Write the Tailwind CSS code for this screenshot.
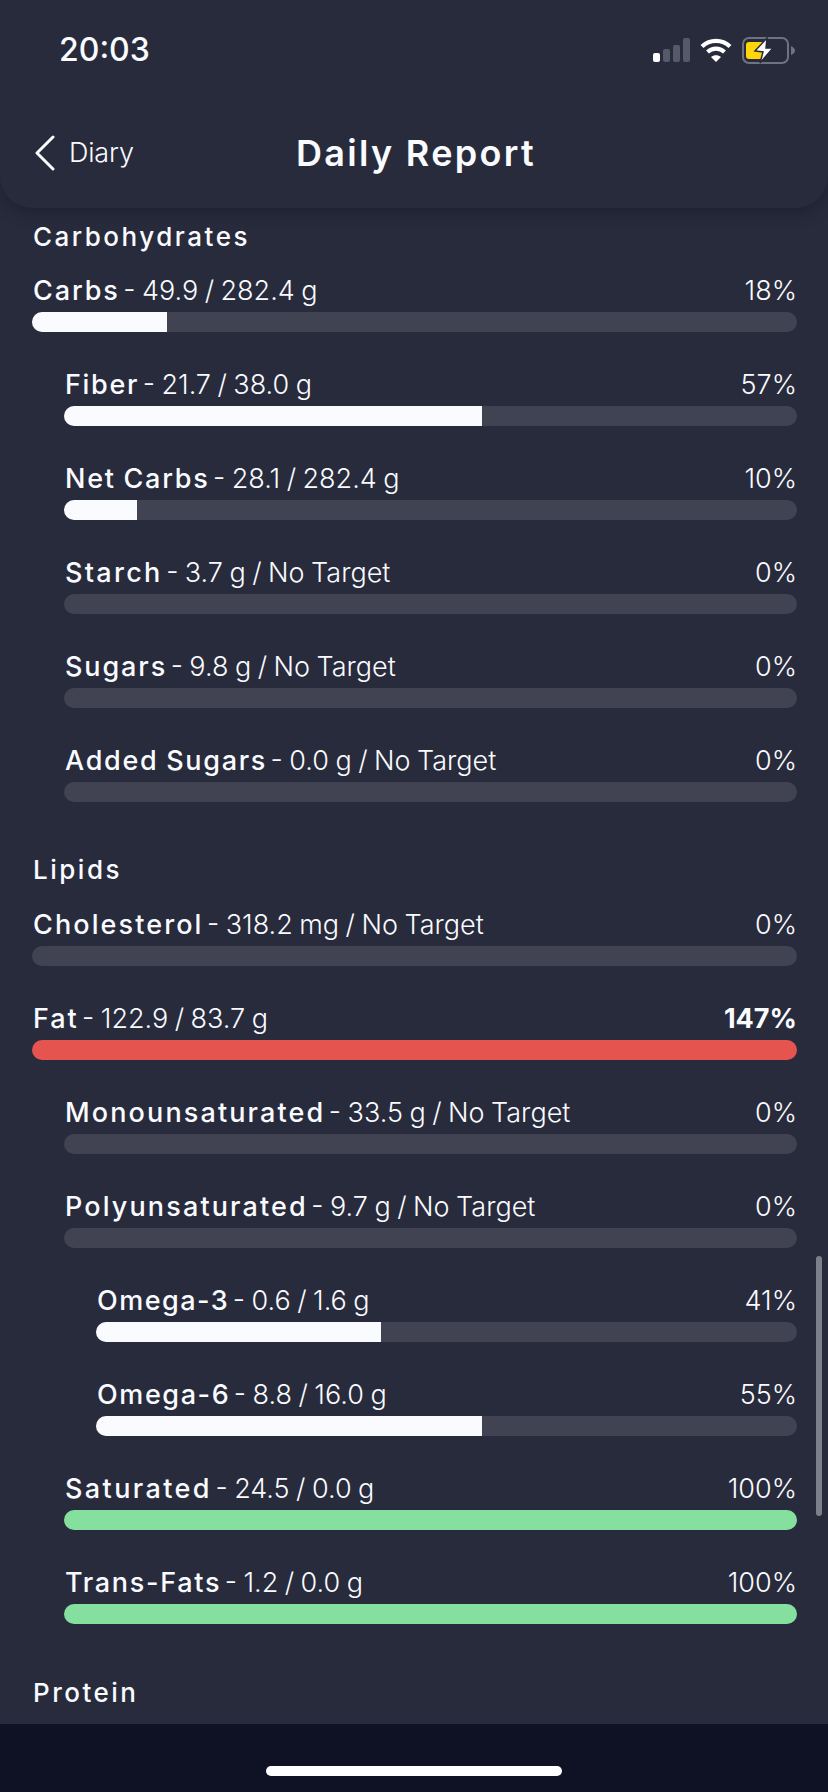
<!DOCTYPE html>
<html lang="en">
<head>
    <meta charset="UTF-8">
    <meta name="viewport" content="width=device-width, initial-scale=1.0">
    <title>Daily Report</title>
    <script src="https://cdn.jsdelivr.net/npm/@tailwindcss/browser@4"></script>
</head>
<body class="bg-[#282b3c]">
    <div class="relative w-[828px] h-[1792px] overflow-hidden flex flex-col bg-[#282b3c] text-[#fafbff] font-['Inter',sans-serif]">

        <!-- header -->
        <header class="relative z-10 h-[208px] shrink-0 bg-[#282b3c] rounded-b-[32px] shadow-[0_6px_16px_rgba(0,0,0,0.22)]">
            <div class="flex items-center justify-between h-[100px] pl-[59px] pr-[32px]">
                <span class="text-[32px] font-medium">20:03</span>
                <div class="flex items-center gap-[10px]">
                    <svg width="37" height="24" viewBox="0 0 37 24">
                        <rect x="0" y="15" width="7" height="9" rx="2" fill="#fff"/>
                        <rect x="10" y="11" width="7" height="13" rx="2" fill="#565968"/>
                        <rect x="20" y="7" width="7" height="17" rx="2" fill="#565968"/>
                        <rect x="30" y="0" width="7" height="24" rx="2" fill="#565968"/>
                    </svg>
                    <svg width="32" height="24" viewBox="0 0 32 24" fill="none" stroke="#fff" stroke-width="4.2">
                        <path d="M2 8.5C10 1 22 1 30 8.5"/>
                        <path d="M7.5 14C12.5 9.5 19.5 9.5 24.5 14"/>
                        <path d="M11 19L16 24L21 19C18 16.5 14 16.5 11 19Z" fill="#fff" stroke="none"/>
                    </svg>
                    <svg width="54" height="27" viewBox="0 0 54 27">
                        <rect x="1" y="1" width="45" height="25" rx="6" fill="none" stroke="#6f7280" stroke-width="2"/>
                        <path d="M49 9C51 10 53 11.5 53 13.5C53 15.5 51 17 49 18Z" fill="#6f7280"/>
                        <rect x="4" y="5" width="18" height="17" rx="3" fill="#ffd60a"/>
                        <path d="M25 1L13 14L21 15L18 26L31 11H24Z" fill="#fff" stroke="#282b3c" stroke-width="1.5"/>
                    </svg>
                </div>
            </div>
            <div class="relative flex items-center justify-center h-[68px] mt-[19px]">
                <div class="absolute left-[34px] top-[14px] flex items-center gap-[14px]">
                    <svg width="21" height="36" viewBox="0 0 21 36" fill="none" stroke="#fafbff" stroke-width="3" stroke-linecap="round" stroke-linejoin="round">
                        <path d="M19 2L3 18L19 34"/>
                    </svg>
                    <span class="text-[27px] font-light tracking-[-0.2px]">Diary</span>
                </div>
                <h1 class="ml-[4px] text-[36px] font-semibold tracking-[2.3px]">Daily Report</h1>
            </div>
        </header>

        <!-- report list -->
        <main class="flex-1 overflow-hidden pl-[32px] pr-[31px] pt-[12px] text-[27px] leading-[34px] font-light [word-spacing:-1.1px]">

            <h2 class="pl-px font-medium text-[26px] tracking-[2.5px] mb-[20px]">Carbohydrates</h2>

            <div class="mb-[36px]">
                <div class="pl-px flex justify-between mb-[4px]"><span><b class="font-medium tracking-[1.9px] mr-[-3px]">Carbs</b> - 49.9 / 282.4 g</span><span>18%</span></div>
                <div class="h-[20px] rounded-[10px] bg-[#414352] overflow-hidden"><div class="h-full bg-[#fafbff]" style="width: 17.7%"></div></div>
            </div>
            <div class="mb-[36px] ml-[32px]">
                <div class="pl-px flex justify-between mb-[4px]"><span><b class="font-medium tracking-[1.7px] mr-[-3px]">Fiber</b> - 21.7 / 38.0 g</span><span>57%</span></div>
                <div class="h-[20px] rounded-[10px] bg-[#414352] overflow-hidden"><div class="h-full bg-[#fafbff]" style="width: 57%"></div></div>
            </div>
            <div class="mb-[36px] ml-[32px]">
                <div class="pl-px flex justify-between mb-[4px]"><span><b class="font-medium tracking-[1.75px] mr-[-3px]">Net Carbs</b> - 28.1 / 282.4 g</span><span>10%</span></div>
                <div class="h-[20px] rounded-[10px] bg-[#414352] overflow-hidden"><div class="h-full bg-[#fafbff]" style="width: 10%"></div></div>
            </div>
            <div class="mb-[36px] ml-[32px]">
                <div class="pl-px flex justify-between mb-[4px]"><span><b class="font-medium tracking-[2.3px] mr-[-3px]">Starch</b> - 3.7 g / No Target</span><span>0%</span></div>
                <div class="h-[20px] rounded-[10px] bg-[#414352]"></div>
            </div>
            <div class="mb-[36px] ml-[32px]">
                <div class="pl-px flex justify-between mb-[4px]"><span><b class="font-medium tracking-[1.9px] mr-[-3px]">Sugars</b> - 9.8 g / No Target</span><span>0%</span></div>
                <div class="h-[20px] rounded-[10px] bg-[#414352]"></div>
            </div>
            <div class="ml-[32px]">
                <div class="pl-px flex justify-between mb-[4px]"><span><b class="font-medium tracking-[1.7px] mr-[-3px]">Added Sugars</b> - 0.0 g / No Target</span><span>0%</span></div>
                <div class="h-[20px] rounded-[10px] bg-[#414352]"></div>
            </div>

            <h2 class="pl-px font-medium text-[26px] tracking-[2.5px] mt-[51px] mb-[21px]">Lipids</h2>

            <div class="mb-[36px]">
                <div class="pl-px flex justify-between mb-[4px]"><span><b class="font-medium tracking-[2.1px] mr-[-3px]">Cholesterol</b> - 318.2 mg / No Target</span><span>0%</span></div>
                <div class="h-[20px] rounded-[10px] bg-[#414352]"></div>
            </div>
            <div class="mb-[36px]">
                <div class="pl-px flex justify-between mb-[4px]"><span><b class="font-medium tracking-[1.9px] mr-[-3px]">Fat</b> - 122.9 / 83.7 g</span><span class="font-bold">147%</span></div>
                <div class="h-[20px] rounded-[10px] bg-[#e5544f]"></div>
            </div>
            <div class="mb-[36px] ml-[32px]">
                <div class="pl-px flex justify-between mb-[4px]"><span><b class="font-medium tracking-[2.13px] mr-[-3px]">Monounsaturated</b> - 33.5 g / No Target</span><span>0%</span></div>
                <div class="h-[20px] rounded-[10px] bg-[#414352]"></div>
            </div>
            <div class="mb-[36px] ml-[32px]">
                <div class="pl-px flex justify-between mb-[4px]"><span><b class="font-medium tracking-[2.13px] mr-[-3px]">Polyunsaturated</b> - 9.7 g / No Target</span><span>0%</span></div>
                <div class="h-[20px] rounded-[10px] bg-[#414352]"></div>
            </div>
            <div class="mb-[36px] ml-[64px]">
                <div class="pl-px flex justify-between mb-[4px]"><span><b class="font-medium tracking-[1.5px] mr-[-3px]">Omega-3</b> - 0.6 / 1.6 g</span><span>41%</span></div>
                <div class="h-[20px] rounded-[10px] bg-[#414352] overflow-hidden"><div class="h-full bg-[#fafbff]" style="width: 40.6%"></div></div>
            </div>
            <div class="mb-[36px] ml-[64px]">
                <div class="pl-px flex justify-between mb-[4px]"><span><b class="font-medium tracking-[1.6px] mr-[-3px]">Omega-6</b> - 8.8 / 16.0 g</span><span>55%</span></div>
                <div class="h-[20px] rounded-[10px] bg-[#414352] overflow-hidden"><div class="h-full bg-[#fafbff]" style="width: 55%"></div></div>
            </div>
            <div class="mb-[36px] ml-[32px]">
                <div class="pl-px flex justify-between mb-[4px]"><span><b class="font-medium tracking-[2.4px] mr-[-3px]">Saturated</b> - 24.5 / 0.0 g</span><span>100%</span></div>
                <div class="h-[20px] rounded-[10px] bg-[#85df9f]"></div>
            </div>
            <div class="ml-[32px]">
                <div class="pl-px flex justify-between mb-[4px]"><span><b class="font-medium tracking-[1.7px] mr-[-3px]">Trans-Fats</b> - 1.2 / 0.0 g</span><span>100%</span></div>
                <div class="h-[20px] rounded-[10px] bg-[#85df9f]"></div>
            </div>

            <h2 class="pl-px font-medium text-[26px] tracking-[2.5px] mt-[52px]">Protein</h2>
        </main>

        <!-- scroll indicator -->
        <div class="absolute left-[816px] top-[1256px] w-[6px] h-[260px] rounded-full bg-[#7d7f8b]"></div>

        <!-- home indicator -->
        <div class="relative h-[68px] shrink-0 bg-[#0f1124] flex justify-center">
            <div class="mt-[42px] w-[296px] h-[10px] rounded-full bg-white"></div>
        </div>
    </div>
</body>
</html>
